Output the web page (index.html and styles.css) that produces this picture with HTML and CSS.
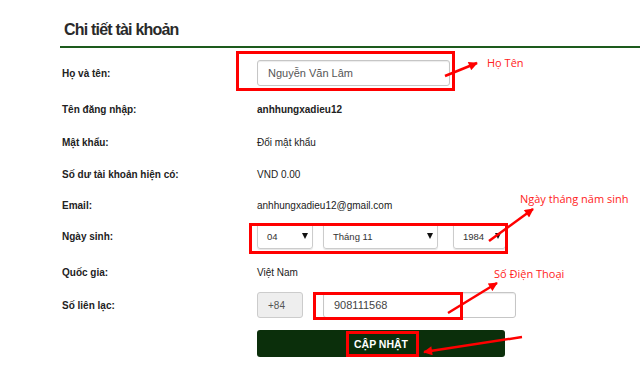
FILE: index.html
```html
<!DOCTYPE html>
<html lang="vi">
<head>
    <meta charset="UTF-8">
    <meta name="viewport" content="width=device-width, initial-scale=1.0">
    <title>Chi tiết tài khoản</title>
    <link rel="stylesheet" href="styles.css">
</head>
<body>
    <div class="page">
        <div class="account">
            <h2 class="account-title">Chi tiết tài khoản</h2>
            <div class="account-form">
                <label class="field-label" for="fullName">Họ và tên:</label>
                <div class="field-value">
                    <input type="text" id="fullName" class="text-input name-input" value="Nguyễn Văn Lâm">
                </div>

                <div class="field-label">Tên đăng nhập:</div>
                <div class="field-value strong">anhhungxadieu12</div>

                <div class="field-label">Mật khẩu:</div>
                <div class="field-value">Đổi mật khẩu</div>

                <div class="field-label">Số dư tài khoản hiện có:</div>
                <div class="field-value">VND 0.00</div>

                <div class="field-label">Email:</div>
                <div class="field-value">anhhungxadieu12@gmail.com</div>

                <div class="field-label">Ngày sinh:</div>
                <div class="field-value date-group">
                    <div class="select select-day"><span>04</span><span class="caret"></span></div>
                    <div class="select select-month"><span>Tháng 11</span><span class="caret"></span></div>
                    <div class="select select-year"><span>1984</span><span class="caret"></span></div>
                </div>

                <div class="field-label">Quốc gia:</div>
                <div class="field-value">Việt Nam</div>

                <label class="field-label" for="phone">Số liên lạc:</label>
                <div class="field-value phone-group">
                    <span class="phone-prefix">+84</span>
                    <input type="text" id="phone" class="text-input phone-input" value="908111568">
                </div>

                <button class="update-btn">CẬP NHẬT</button>
            </div>
        </div>

        <!-- red annotations drawn over the form -->
        <svg class="marks" width="640" height="372" viewBox="0 0 640 372">
            <defs>
                <marker id="head" viewBox="0 0 10 10" refX="9" refY="5" markerWidth="11" markerHeight="9" markerUnits="userSpaceOnUse" orient="auto">
                    <path d="M0 0 L10 5 L0 10 z" fill="#f00"/>
                </marker>
            </defs>
            <g fill="none" stroke="#f00" stroke-width="3">
                <rect x="237.5" y="52.5" width="216" height="37"/>
                <rect x="250.5" y="224.5" width="256" height="28"/>
                <rect x="314.5" y="293.5" width="147" height="25"/>
                <rect x="347.5" y="332.5" width="70" height="23"/>
            </g>
            <g stroke="#f00" stroke-width="2.5" marker-end="url(#head)">
                <line x1="445" y1="76" x2="477" y2="63"/>
                <line x1="489" y1="241" x2="533" y2="209"/>
                <line x1="448" y1="313" x2="497" y2="283"/>
                <line x1="522" y1="337" x2="424" y2="352"/>
            </g>
        </svg>
        <span class="note note-name">Họ Tên</span>
        <span class="note note-birth">Ngày tháng năm sinh</span>
        <span class="note note-phone">Số Điện Thoại</span>
    </div>
</body>
</html>
```

FILE: styles.css
```css
body {
    margin: 0;
    background-color: white;
    font-family: "Liberation Sans", Arial, sans-serif;
    color: #222;
}
.page {
    position: relative;
    width: 640px;
    height: 372px;
    overflow: hidden;
}
.account {
    margin-left: 60px;
}
.account-title {
    margin: 0;
    padding: 20px 0 6px 4px;
    font-size: 16px;
    line-height: 20px;
    letter-spacing: -0.8px;
    font-weight: bold;
    color: #2a2a2a;
    border-bottom: 2px solid #1d5b1d;
}
.account-form {
    display: grid;
    grid-template-columns: 195px 1fr;
    grid-template-rows: 36px 36px 30px 34px 28px 34px 38px 28px auto;
    align-items: center;
    padding: 7px 0 0 2px;
    font-size: 10px;
}
.field-label {
    font-weight: bold;
}
.field-value.strong {
    font-weight: bold;
}
.text-input {
    box-sizing: border-box;
    height: 26px;
    padding: 0 10px;
    border: 1px solid #c6c6c6;
    border-radius: 3px;
    box-shadow: inset 0 1px 1px rgba(0, 0, 0, 0.08);
    font: 11px "Liberation Sans", Arial, sans-serif;
    color: #555;
}
.name-input {
    width: 193px;
}
.date-group {
    display: flex;
}
.select {
    box-sizing: border-box;
    height: 26px;
    display: flex;
    align-items: center;
    justify-content: space-between;
    padding: 0 4px 0 9px;
    border: 1px solid #ccc;
    border-radius: 3px;
    box-shadow: 0 1px 1px rgba(0, 0, 0, 0.1);
    font-size: 9.5px;
    color: #333;
}
.select-day {
    width: 56px;
    margin-right: 10px;
}
.select-month {
    width: 115px;
    margin-right: 15px;
}
.select-year {
    width: 53px;
}
.caret {
    border-left: 3px solid transparent;
    border-right: 3px solid transparent;
    border-top: 6px solid #111;
}
.phone-group {
    display: flex;
    gap: 20px;
}
.phone-prefix {
    box-sizing: border-box;
    width: 46px;
    height: 26px;
    display: flex;
    align-items: center;
    padding-left: 10px;
    background-color: #eee;
    border: 1px solid #ccc;
    border-radius: 3px;
    color: #555;
}
.phone-input {
    width: 193px;
    color: #444;
}
.update-btn {
    grid-column: 2;
    align-self: start;
    margin-top: 11px;
    width: 248px;
    height: 27px;
    border: none;
    border-radius: 3px;
    background-color: #0b2f0b;
    color: white;
    font: bold 10.5px "Liberation Sans", Arial, sans-serif;
    cursor: pointer;
}
.marks {
    position: absolute;
    top: 0;
    left: 0;
    pointer-events: none;
}
.note {
    position: absolute;
    font: 11px "Open Sans", sans-serif;
    line-height: 1;
    color: #f22;
    white-space: nowrap;
}
.note-name {
    left: 487px;
    top: 57px;
}
.note-birth {
    left: 520px;
    top: 193px;
}
.note-phone {
    left: 494px;
    top: 268px;
}
```
